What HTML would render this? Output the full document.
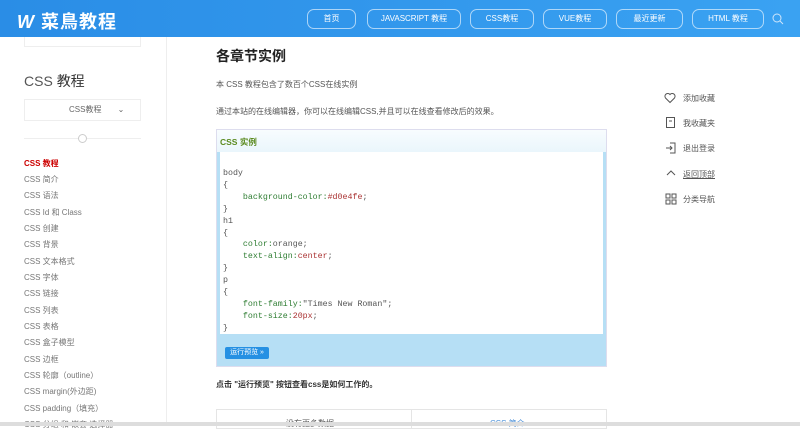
<!DOCTYPE html>
<html><head><meta charset="utf-8"><style>
*{margin:0;padding:0;box-sizing:border-box}
body{width:800px;height:426px;overflow:hidden;background:#fff;font-family:"Liberation Sans","Noto Sans CJK SC",sans-serif;position:relative;color:#333}
.hdr{position:absolute;left:0;top:0;width:800px;height:37px;background:linear-gradient(90deg,#2a8de6,#3aa2f2)}
.logo{position:absolute;left:17px;top:8px;color:#fff;font-size:18px;font-weight:bold;letter-spacing:1px}
.nb{position:absolute;top:9px;height:20px;border:1px solid rgba(255,255,255,.6);border-radius:7px;color:#fff;font-size:8px;text-align:center;line-height:18px}
.a{position:absolute;white-space:nowrap}
.side a{display:block;position:absolute;left:24px;font-size:8px;color:#777;white-space:nowrap}
.code{position:absolute;left:223px;font-family:"Liberation Mono",monospace;font-size:8.3px;color:#555;white-space:pre}
.g{color:#2e7d32}.r{color:#a33}
.ri{position:absolute;left:683px;font-size:8px;color:#555}
</style></head><body>
<div class="hdr">
<div class="logo"><span style="font-style:italic">W</span> 菜鳥教程</div>
<div class="nb" style="left:307px;width:49px">首页</div>
<div class="nb" style="left:367px;width:94px">JAVASCRIPT 教程</div>
<div class="nb" style="left:470px;width:64px">CSS教程</div>
<div class="nb" style="left:543px;width:64px">VUE教程</div>
<div class="nb" style="left:616px;width:67px">最近更新</div>
<div class="nb" style="left:692px;width:72px">HTML 教程</div>
<svg class="a" style="left:772px;top:13px" width="12" height="12"><circle cx="5" cy="5" r="4" stroke="#cfe6fb" fill="none"/><line x1="8" y1="8" x2="11" y2="11" stroke="#cfe6fb"/></svg>
</div>
<div class="a" style="left:166px;top:37px;width:1px;height:389px;background:#eee"></div>
<div class="a" style="left:24px;top:37px;width:117px;height:10px;border:1px solid #eee;border-top:none"></div>
<div class="a" style="left:24px;top:71px;font-size:14px;color:#555">CSS <span style="color:#333">教程</span></div>
<div class="a" style="left:24px;top:99px;width:117px;height:22px;border:1px solid #eee;font-size:8px;color:#666;line-height:20px;padding-left:44px">CSS教程 <span style="margin-left:14px">&#8964;</span></div>
<div class="a" style="left:24px;top:138px;width:117px;height:1px;background:#eee"></div>
<div class="a" style="left:78px;top:134px;width:9px;height:9px;border:1px solid #ccc;border-radius:50%;background:#fff"></div>
<div class="side">
<a style="top:158px;color:#c00;font-weight:bold">CSS 教程</a>
<a style="top:174px">CSS 简介</a><a style="top:190px">CSS 语法</a><a style="top:207px">CSS Id 和 Class</a>
<a style="top:223px">CSS 创建</a><a style="top:239px">CSS 背景</a><a style="top:256px">CSS 文本格式</a>
<a style="top:272px">CSS 字体</a><a style="top:288px">CSS 链接</a><a style="top:305px">CSS 列表</a>
<a style="top:321px">CSS 表格</a><a style="top:337px">CSS 盒子模型</a><a style="top:354px">CSS 边框</a>
<a style="top:370px">CSS 轮廓（outline）</a><a style="top:386px">CSS margin(外边距)</a><a style="top:403px">CSS padding（填充）</a>
<a style="top:419px">CSS 分组 和 嵌套 选择器</a>
</div>
<div class="a" style="left:216px;top:46px;font-size:14px;font-weight:bold;color:#222">各章节实例</div>
<div class="a" style="left:216px;top:79px;font-size:8px;color:#555">本 CSS 教程包含了数百个CSS在线实例</div>
<div class="a" style="left:216px;top:106px;font-size:8px;color:#555">通过本站的在线编辑器，你可以在线编辑CSS,并且可以在线查看修改后的效果。</div>
<div class="a" style="left:216px;top:129px;width:391px;height:238px;background:#b6dff5;border:1px solid #dde"></div>
<div class="a" style="left:217px;top:130px;width:389px;height:22px;background:linear-gradient(#f8fcfe,#eaf6fc)"></div>
<div class="a" style="left:220px;top:136px;font-size:8.5px;font-weight:bold;color:#5a8a1e">CSS 实例</div>
<div class="a" style="left:220px;top:152px;width:383px;height:182px;background:#fff"></div>
<div class="code" style="top:168px;line-height:11.9px">body
{
    <span class="g">background-color:</span><span class="r">#d0e4fe</span>;
}
h1
{
    <span class="g">color:</span>orange;
    <span class="g">text-align:</span><span class="r">center</span>;
}
p
{
    <span class="g">font-family:</span>"Times New Roman";
    <span class="g">font-size:</span><span class="r">20px</span>;
}</div>
<div class="a" style="left:225px;top:347px;width:44px;height:12px;background:#2590e3;border-radius:2px;color:#fff;font-size:7px;line-height:12px;text-align:center">运行预览 »</div>
<div class="a" style="left:216px;top:379px;font-size:8px;color:#333;font-weight:bold">点击 "运行预览" 按钮查看css是如何工作的。</div>
<div class="a" style="left:216px;top:409px;width:391px;height:20px;border:1px solid #e5e5e5"></div>
<div class="a" style="left:411px;top:409px;width:1px;height:20px;background:#e5e5e5"></div>
<div class="a" style="left:286px;top:418px;font-size:8px;color:#555">没有更多数据</div>
<div class="a" style="left:490px;top:418px;font-size:8px;color:#4a8fd8">CSS 简介 »</div>
<div class="a" style="left:0;top:422px;width:800px;height:4px;background:#ddd"></div>
<svg class="a" style="left:664px;top:92px" width="12" height="12"><path d="M6 10.5 L1.5 6 A2.6 2.6 0 0 1 6 2.6 A2.6 2.6 0 0 1 10.5 6 Z" fill="none" stroke="#555"/></svg>
<div class="ri" style="top:93px">添加收藏</div>
<svg class="a" style="left:666px;top:117px" width="10" height="12"><rect x="0.5" y="0.5" width="8" height="10" fill="none" stroke="#555"/><line x1="3" y1="4" x2="6" y2="4" stroke="#555"/></svg>
<div class="ri" style="top:118px">我收藏夹</div>
<svg class="a" style="left:665px;top:142px" width="12" height="12"><path d="M5 1H10V11H5M1 6H7M5 4L7 6 5 8" fill="none" stroke="#555"/></svg>
<div class="ri" style="top:143px">退出登录</div>
<svg class="a" style="left:665px;top:168px" width="12" height="10"><path d="M2 7L6 3 10 7" fill="none" stroke="#555"/></svg>
<div class="ri" style="top:169px;text-decoration:underline">返回顶部</div>
<svg class="a" style="left:665px;top:193px" width="12" height="12"><rect x="1" y="1" width="4" height="4" fill="none" stroke="#555"/><rect x="7" y="1" width="4" height="4" fill="none" stroke="#555"/><rect x="1" y="7" width="4" height="4" fill="none" stroke="#555"/><rect x="7" y="7" width="4" height="4" fill="none" stroke="#555"/></svg>
<div class="ri" style="top:194px">分类导航</div>
</body></html>
